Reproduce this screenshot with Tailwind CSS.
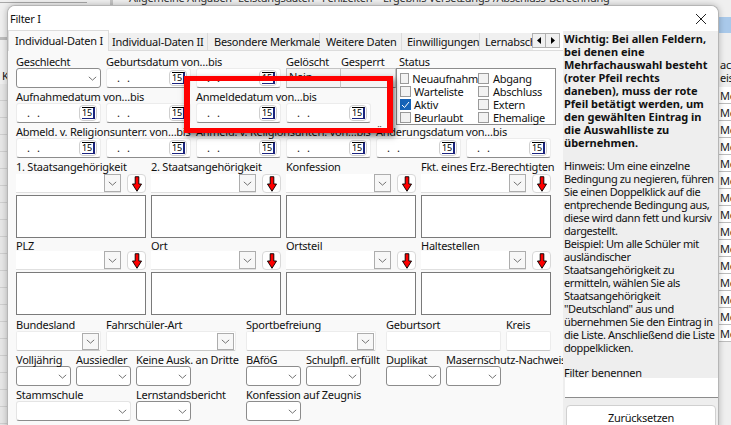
<!DOCTYPE html>
<html lang="de">
<head>
<meta charset="utf-8">
<script src="https://cdn.jsdelivr.net/npm/@tailwindcss/browser@4"></script>
</head>
<body class="m-0">
<svg class="hidden" width="0" height="0">
  <symbol id="chev" viewBox="0 0 11 6"><path d="M1 1l4.5 4L10 1" fill="none" stroke="#555" stroke-width="1"/></symbol>
  <symbol id="arr" viewBox="0 0 11 17"><path d="M3.5 .5h4v8h3l-5 8-5-8h3z" fill="#f00" stroke="#000" stroke-width="1"/></symbol>
</svg>
<div class="relative w-[731px] h-[425px] overflow-hidden bg-[#efefef] font-['Noto_Sans',sans-serif] text-[11px] tracking-[-0.25px] leading-[13px] text-[#111]">

  <!-- window behind -->
  <div class="absolute left-0 top-[2px] w-[87px] h-px bg-[#a8a8a8]"></div>
  <div class="absolute left-[110px] top-0 w-[3px] h-[5px] bg-[#c4c4c4]"></div>
  <div class="absolute left-[129px] top-[-9px] flex whitespace-nowrap text-[#333]">
    <span class="w-[109px]">Allgemeine Angaben</span><span class="w-[84px]">Leistungsdaten</span><span class="w-[61px]">Fehlzeiten</span><span>Ergebnis Versetzungs-/Abschluss-Berechnung</span>
  </div>
  <div class="absolute left-0 top-[37px] w-[7px] h-[3px] bg-[#bdbdbd]"></div>
  <div class="absolute left-[2px] top-[69px]">K</div>
  <div class="absolute left-0 top-[84px] w-[7px] h-[341px] bg-[repeating-linear-gradient(180deg,#e6e6e6_0,#e6e6e6_16px,#cfcfcf_16px,#cfcfcf_17px)]"></div>
  <div class="absolute left-[719px] top-[17px] w-[12px] h-[16px] bg-[#a9c9ea]"></div>
  <div class="absolute left-[719px] top-[58px] whitespace-nowrap pl-px"><div>ach</div><div>eis</div></div>
  <div class="absolute left-[719px] top-[87px] w-[12px] h-[255px] overflow-hidden pl-px bg-[repeating-linear-gradient(180deg,#fff_0,#fff_16px,#bdbdbd_16px,#bdbdbd_17px)] leading-[17px] text-[#222]">Me<br>Me<br>Me<br>Me<br>Me<br>Me<br>Me<br>Me<br>Me<br>Me<br>Me<br>Me<br>Me<br>Me<br>Me</div>

  <!-- dialog -->
  <div class="absolute left-[7px] top-[5px] w-[712px] h-[425px] flex flex-col rounded-t-[8px] overflow-hidden border border-b-0 border-[#b5b5b5] shadow-[0_0_6px_rgba(0,0,0,0.25)] bg-[#f9f9f9]">
    <div class="h-[25px] shrink-0 bg-white flex items-center justify-between pl-[2px] pr-[11px]">
      <span>Filter I</span>
      <svg width="12" height="12" viewBox="0 0 12 12"><path d="M1 1l10 10M11 1L1 11" stroke="#222" stroke-width="1"/></svg>
    </div>
    <div class="flex flex-1 min-h-0">
      <!-- left -->
      <div class="w-[555px] shrink-0 flex flex-col">
        <!-- tabs -->
        <div class="relative h-[20px] shrink-0 flex items-end border-b border-[#dcdcdc] bg-white">
          <div class="w-[101px] h-[21px] -mb-px z-10 bg-[#f9f9f9] border border-b-0 border-[#dcdcdc] pl-[6px] pt-[3px] whitespace-nowrap">Individual-Daten I</div>
          <div class="w-[99px] h-[17px] bg-[#f0f0f0] border-r border-[#dcdcdc] pl-[3px] pt-[2px] whitespace-nowrap">Individual-Daten II</div>
          <div class="w-[112px] h-[17px] bg-[#f0f0f0] border-r border-[#dcdcdc] pl-[6px] pt-[2px] whitespace-nowrap">Besondere Merkmale</div>
          <div class="w-[82px] h-[17px] bg-[#f0f0f0] border-r border-[#dcdcdc] pl-[6px] pt-[2px] whitespace-nowrap">Weitere Daten</div>
          <div class="w-[78px] h-[17px] bg-[#f0f0f0] border-r border-[#dcdcdc] pl-[5px] pt-[2px] whitespace-nowrap">Einwilligungen</div>
          <div class="w-[53px] h-[17px] bg-[#f0f0f0] pl-[5px] pt-[2px] whitespace-nowrap overflow-hidden">Lernabschluss</div>
          <div class="absolute left-[524px] top-[2px] flex">
            <div class="w-[14px] h-[15px] bg-[#f0f0f0] border border-[#b0b0b0] flex items-center justify-center"><svg width="4" height="7" viewBox="0 0 4 7"><path d="M4 0v7L0 3.5z" fill="#000"/></svg></div>
            <div class="w-[14px] h-[15px] bg-[#f0f0f0] border border-l-0 border-[#b0b0b0] flex items-center justify-center"><svg width="4" height="7" viewBox="0 0 4 7"><path d="M0 0v7l4-3.5z" fill="#000"/></svg></div>
          </div>
        </div>

        <div class="flex-1 flex flex-col pl-[8px] pt-[4px]">
          <!-- row 1 -->
          <div class="flex h-[35px] shrink-0 gap-[5px]">
            <div class="w-[85px]"><div class="h-[13px] whitespace-nowrap">Geschlecht</div>
              <div class="h-[20px] bg-white border border-[#8c8c8c] rounded-[3px] flex items-center justify-end pr-[3px]"><svg class="w-[9px] h-[5px]"><use href="#chev"/></svg></div></div>
            <div class="w-[85px]"><div class="h-[13px] whitespace-nowrap">Geburtsdatum von…bis</div>
              <div class="h-[20px] bg-white border border-[#ececec] border-b-[#8c8c8c] rounded-[3px] flex items-center justify-between pl-[10px] pr-[3px]"><span class="tracking-[7px] -mt-px">..</span><span class="w-[18px] h-[16px] border border-[#cfcfcf] rounded-[4px] flex items-center justify-center"><span class="w-[13px] h-[12px] border-t border-r-2 border-b border-t-black border-[#1a237e] text-[9px] leading-[10px] text-center text-black">15</span></span></div></div>
            <div class="w-[85px]"><div class="h-[13px]"></div>
              <div class="h-[20px] bg-white border border-[#ececec] border-b-[#8c8c8c] rounded-[3px] flex items-center justify-between pl-[10px] pr-[3px]"><span class="tracking-[7px] -mt-px">..</span><span class="w-[18px] h-[16px] border border-[#cfcfcf] rounded-[4px] flex items-center justify-center"><span class="w-[13px] h-[12px] border-t border-r-2 border-b border-t-black border-[#1a237e] text-[9px] leading-[10px] text-center text-black">15</span></span></div></div>
            <div class="w-[55px]"><div class="h-[13px] whitespace-nowrap">Gelöscht</div>
              <div class="h-[20px] bg-[#f4f4f4] border border-[#c4c4c4] border-b-[#8c8c8c] pl-[2px] pt-px">Nein</div></div>
            <div class="w-[55px] -ml-[5px]"><div class="h-[13px] whitespace-nowrap">Gesperrt</div>
              <div class="h-[20px] bg-[#f4f4f4] border border-l-0 border-[#c4c4c4] border-b-[#8c8c8c]"></div></div>
            <div class="-ml-[5px]"><div class="h-[13px] whitespace-nowrap pl-[3px]">Status</div>
              <div class="w-[160px] h-[57px] bg-white border border-[#8c8c8c] flex pl-[3px] pt-[3px]">
                <div class="w-[78px] flex flex-col">
                  <div class="h-[13px] flex items-center gap-[3px] whitespace-nowrap"><span class="w-[11px] h-[11px] border border-[#9a9a9a] bg-[#f2f2f2]"></span>Neuaufnahm</div>
                  <div class="h-[13px] flex items-center gap-[3px] whitespace-nowrap"><span class="w-[11px] h-[11px] border border-[#9a9a9a] bg-[#f2f2f2]"></span>Warteliste</div>
                  <div class="h-[13px] flex items-center gap-[3px] whitespace-nowrap"><span class="w-[11px] h-[11px] bg-[#1563b8] flex items-center justify-center"><svg width="9" height="8" viewBox="0 0 9 8"><path d="M1 4l2.5 2.5L8 1" fill="none" stroke="#fff" stroke-width="1"/></svg></span>Aktiv</div>
                  <div class="h-[13px] flex items-center gap-[3px] whitespace-nowrap"><span class="w-[11px] h-[11px] border border-[#9a9a9a] bg-[#f2f2f2]"></span>Beurlaubt</div>
                </div>
                <div class="flex flex-col">
                  <div class="h-[13px] flex items-center gap-[4px] whitespace-nowrap"><span class="w-[11px] h-[11px] border border-[#9a9a9a] bg-[#f2f2f2]"></span>Abgang</div>
                  <div class="h-[13px] flex items-center gap-[4px] whitespace-nowrap"><span class="w-[11px] h-[11px] border border-[#9a9a9a] bg-[#f2f2f2]"></span>Abschluss</div>
                  <div class="h-[13px] flex items-center gap-[4px] whitespace-nowrap"><span class="w-[11px] h-[11px] border border-[#9a9a9a] bg-[#f2f2f2]"></span>Extern</div>
                  <div class="h-[13px] flex items-center gap-[4px] whitespace-nowrap"><span class="w-[11px] h-[11px] border border-[#9a9a9a] bg-[#f2f2f2]"></span>Ehemalige</div>
                </div>
              </div>
            </div>
          </div>
          <!-- row 2 -->
          <div class="flex h-[35px] shrink-0 gap-[5px]">
            <div class="w-[85px]"><div class="h-[13px] whitespace-nowrap">Aufnahmedatum von…bis</div>
              <div class="h-[20px] bg-white border border-[#ececec] border-b-[#8c8c8c] rounded-[3px] flex items-center justify-between pl-[10px] pr-[3px]"><span class="tracking-[7px] -mt-px">..</span><span class="w-[18px] h-[16px] border border-[#cfcfcf] rounded-[4px] flex items-center justify-center"><span class="w-[13px] h-[12px] border-t border-r-2 border-b border-t-black border-[#1a237e] text-[9px] leading-[10px] text-center text-black">15</span></span></div></div>
            <div class="w-[85px]"><div class="h-[13px]"></div>
              <div class="h-[20px] bg-white border border-[#ececec] border-b-[#8c8c8c] rounded-[3px] flex items-center justify-between pl-[10px] pr-[3px]"><span class="tracking-[7px] -mt-px">..</span><span class="w-[18px] h-[16px] border border-[#cfcfcf] rounded-[4px] flex items-center justify-center"><span class="w-[13px] h-[12px] border-t border-r-2 border-b border-t-black border-[#1a237e] text-[9px] leading-[10px] text-center text-black">15</span></span></div></div>
            <div class="w-[85px]"><div class="h-[13px] whitespace-nowrap">Anmeldedatum von…bis</div>
              <div class="h-[20px] bg-white border border-[#ececec] border-b-[#8c8c8c] rounded-[3px] flex items-center justify-between pl-[10px] pr-[3px]"><span class="tracking-[7px] -mt-px">..</span><span class="w-[18px] h-[16px] border border-[#cfcfcf] rounded-[4px] flex items-center justify-center"><span class="w-[13px] h-[12px] border-t border-r-2 border-b border-t-black border-[#1a237e] text-[9px] leading-[10px] text-center text-black">15</span></span></div></div>
            <div class="w-[85px]"><div class="h-[13px]"></div>
              <div class="h-[20px] bg-white border border-[#ececec] border-b-[#8c8c8c] rounded-[3px] flex items-center justify-between pl-[10px] pr-[3px]"><span class="tracking-[7px] -mt-px">..</span><span class="w-[18px] h-[16px] border border-[#cfcfcf] rounded-[4px] flex items-center justify-center"><span class="w-[13px] h-[12px] border-t border-r-2 border-b border-t-black border-[#1a237e] text-[9px] leading-[10px] text-center text-black">15</span></span></div></div>
          </div>
          <!-- row 3 -->
          <div class="flex h-[35px] shrink-0 gap-[5px]">
            <div class="w-[85px]"><div class="h-[13px] whitespace-nowrap">Abmeld. v. Religionsunterr. von…bis</div>
              <div class="h-[20px] bg-white border border-[#ececec] border-b-[#8c8c8c] rounded-[3px] flex items-center justify-between pl-[10px] pr-[3px]"><span class="tracking-[7px] -mt-px">..</span><span class="w-[18px] h-[16px] border border-[#cfcfcf] rounded-[4px] flex items-center justify-center"><span class="w-[13px] h-[12px] border-t border-r-2 border-b border-t-black border-[#1a237e] text-[9px] leading-[10px] text-center text-black">15</span></span></div></div>
            <div class="w-[85px]"><div class="h-[13px]"></div>
              <div class="h-[20px] bg-white border border-[#ececec] border-b-[#8c8c8c] rounded-[3px] flex items-center justify-between pl-[10px] pr-[3px]"><span class="tracking-[7px] -mt-px">..</span><span class="w-[18px] h-[16px] border border-[#cfcfcf] rounded-[4px] flex items-center justify-center"><span class="w-[13px] h-[12px] border-t border-r-2 border-b border-t-black border-[#1a237e] text-[9px] leading-[10px] text-center text-black">15</span></span></div></div>
            <div class="w-[85px]"><div class="h-[13px] whitespace-nowrap">Anmeld. v. Religionsunterr. von…bis</div>
              <div class="h-[20px] bg-white border border-[#ececec] border-b-[#8c8c8c] rounded-[3px] flex items-center justify-between pl-[10px] pr-[3px]"><span class="tracking-[7px] -mt-px">..</span><span class="w-[18px] h-[16px] border border-[#cfcfcf] rounded-[4px] flex items-center justify-center"><span class="w-[13px] h-[12px] border-t border-r-2 border-b border-t-black border-[#1a237e] text-[9px] leading-[10px] text-center text-black">15</span></span></div></div>
            <div class="w-[85px]"><div class="h-[13px]"></div>
              <div class="h-[20px] bg-white border border-[#ececec] border-b-[#8c8c8c] rounded-[3px] flex items-center justify-between pl-[10px] pr-[3px]"><span class="tracking-[7px] -mt-px">..</span><span class="w-[18px] h-[16px] border border-[#cfcfcf] rounded-[4px] flex items-center justify-center"><span class="w-[13px] h-[12px] border-t border-r-2 border-b border-t-black border-[#1a237e] text-[9px] leading-[10px] text-center text-black">15</span></span></div></div>
            <div class="w-[85px]"><div class="h-[13px] whitespace-nowrap">Änderungsdatum von…bis</div>
              <div class="h-[20px] bg-white border border-[#ececec] border-b-[#8c8c8c] rounded-[3px] flex items-center justify-between pl-[10px] pr-[3px]"><span class="tracking-[7px] -mt-px">..</span><span class="w-[18px] h-[16px] border border-[#cfcfcf] rounded-[4px] flex items-center justify-center"><span class="w-[13px] h-[12px] border-t border-r-2 border-b border-t-black border-[#1a237e] text-[9px] leading-[10px] text-center text-black">15</span></span></div></div>
            <div class="w-[85px]"><div class="h-[13px]"></div>
              <div class="h-[20px] bg-white border border-[#ececec] border-b-[#8c8c8c] rounded-[3px] flex items-center justify-between pl-[10px] pr-[3px]"><span class="tracking-[7px] -mt-px">..</span><span class="w-[18px] h-[16px] border border-[#cfcfcf] rounded-[4px] flex items-center justify-center"><span class="w-[13px] h-[12px] border-t border-r-2 border-b border-t-black border-[#1a237e] text-[9px] leading-[10px] text-center text-black">15</span></span></div></div>
          </div>
          <!-- row 4 -->
          <div class="flex h-[79px] shrink-0 gap-[5px]">
            <div class="w-[130px]"><div class="h-[14px] whitespace-nowrap">1. Staatsangehörigkeit</div>
              <div class="flex h-[19px] justify-between"><div class="w-[105px] bg-white border-b border-[#e0e0e0] flex justify-end"><span class="w-[17px] h-[18px] border border-[#adadad] bg-[#f7f7f7] flex items-center justify-center"><svg class="w-[9px] h-[5px]"><use href="#chev"/></svg></span></div><div class="w-[19px] border border-[#d8d8d8] rounded-[4px] bg-white flex items-center justify-center"><svg class="w-[10px] h-[16px]"><use href="#arr"/></svg></div></div>
              <div class="h-[43px] mt-[2px] bg-white border border-[#7a7a7a]"></div></div>
            <div class="w-[130px]"><div class="h-[14px] whitespace-nowrap">2. Staatsangehörigkeit</div>
              <div class="flex h-[19px] justify-between"><div class="w-[105px] bg-white border-b border-[#e0e0e0] flex justify-end"><span class="w-[17px] h-[18px] border border-[#adadad] bg-[#f7f7f7] flex items-center justify-center"><svg class="w-[9px] h-[5px]"><use href="#chev"/></svg></span></div><div class="w-[19px] border border-[#d8d8d8] rounded-[4px] bg-white flex items-center justify-center"><svg class="w-[10px] h-[16px]"><use href="#arr"/></svg></div></div>
              <div class="h-[43px] mt-[2px] bg-white border border-[#7a7a7a]"></div></div>
            <div class="w-[130px]"><div class="h-[14px] whitespace-nowrap">Konfession</div>
              <div class="flex h-[19px] justify-between"><div class="w-[105px] bg-white border-b border-[#e0e0e0] flex justify-end"><span class="w-[17px] h-[18px] border border-[#adadad] bg-[#f7f7f7] flex items-center justify-center"><svg class="w-[9px] h-[5px]"><use href="#chev"/></svg></span></div><div class="w-[19px] border border-[#d8d8d8] rounded-[4px] bg-white flex items-center justify-center"><svg class="w-[10px] h-[16px]"><use href="#arr"/></svg></div></div>
              <div class="h-[43px] mt-[2px] bg-white border border-[#7a7a7a]"></div></div>
            <div class="w-[130px]"><div class="h-[14px] whitespace-nowrap">Fkt. eines Erz.-Berechtigten</div>
              <div class="flex h-[19px] justify-between"><div class="w-[105px] bg-white border-b border-[#e0e0e0] flex justify-end"><span class="w-[17px] h-[18px] border border-[#adadad] bg-[#f7f7f7] flex items-center justify-center"><svg class="w-[9px] h-[5px]"><use href="#chev"/></svg></span></div><div class="w-[19px] border border-[#d8d8d8] rounded-[4px] bg-white flex items-center justify-center"><svg class="w-[10px] h-[16px]"><use href="#arr"/></svg></div></div>
              <div class="h-[43px] mt-[2px] bg-white border border-[#7a7a7a]"></div></div>
          </div>
          <!-- row 5 -->
          <div class="flex h-[79px] shrink-0 gap-[5px]">
            <div class="w-[130px]"><div class="h-[12px] whitespace-nowrap">PLZ</div>
              <div class="flex h-[19px] justify-between"><div class="w-[105px] bg-white border-b border-[#e0e0e0] flex justify-end"><span class="w-[17px] h-[18px] border border-[#adadad] bg-[#f7f7f7] flex items-center justify-center"><svg class="w-[9px] h-[5px]"><use href="#chev"/></svg></span></div><div class="w-[19px] border border-[#d8d8d8] rounded-[4px] bg-white flex items-center justify-center"><svg class="w-[10px] h-[16px]"><use href="#arr"/></svg></div></div>
              <div class="h-[43px] mt-[2px] bg-white border border-[#7a7a7a]"></div></div>
            <div class="w-[130px]"><div class="h-[12px] whitespace-nowrap">Ort</div>
              <div class="flex h-[19px] justify-between"><div class="w-[105px] bg-white border-b border-[#e0e0e0] flex justify-end"><span class="w-[17px] h-[18px] border border-[#adadad] bg-[#f7f7f7] flex items-center justify-center"><svg class="w-[9px] h-[5px]"><use href="#chev"/></svg></span></div><div class="w-[19px] border border-[#d8d8d8] rounded-[4px] bg-white flex items-center justify-center"><svg class="w-[10px] h-[16px]"><use href="#arr"/></svg></div></div>
              <div class="h-[43px] mt-[2px] bg-white border border-[#7a7a7a]"></div></div>
            <div class="w-[130px]"><div class="h-[12px] whitespace-nowrap">Ortsteil</div>
              <div class="flex h-[19px] justify-between"><div class="w-[105px] bg-white border-b border-[#e0e0e0] flex justify-end"><span class="w-[17px] h-[18px] border border-[#adadad] bg-[#f7f7f7] flex items-center justify-center"><svg class="w-[9px] h-[5px]"><use href="#chev"/></svg></span></div><div class="w-[19px] border border-[#d8d8d8] rounded-[4px] bg-white flex items-center justify-center"><svg class="w-[10px] h-[16px]"><use href="#arr"/></svg></div></div>
              <div class="h-[43px] mt-[2px] bg-white border border-[#7a7a7a]"></div></div>
            <div class="w-[130px]"><div class="h-[12px] whitespace-nowrap">Haltestellen</div>
              <div class="flex h-[19px] justify-between"><div class="w-[105px] bg-white border-b border-[#e0e0e0] flex justify-end"><span class="w-[17px] h-[18px] border border-[#adadad] bg-[#f7f7f7] flex items-center justify-center"><svg class="w-[9px] h-[5px]"><use href="#chev"/></svg></span></div><div class="w-[19px] border border-[#d8d8d8] rounded-[4px] bg-white flex items-center justify-center"><svg class="w-[10px] h-[16px]"><use href="#arr"/></svg></div></div>
              <div class="h-[43px] mt-[2px] bg-white border border-[#7a7a7a]"></div></div>
          </div>
          <!-- row 6 -->
          <div class="flex h-[35px] shrink-0">
            <div class="w-[85px] mr-[5px]"><div class="h-[13px] whitespace-nowrap">Bundesland</div>
              <div class="h-[20px] bg-white border border-[#ececec] border-b-[#c8c8c8] rounded-[2px] flex items-center justify-end pr-px"><span class="w-[17px] h-[17px] border border-[#adadad] bg-[#f7f7f7] flex items-center justify-center"><svg class="w-[9px] h-[5px]"><use href="#chev"/></svg></span></div></div>
            <div class="w-[130px] mr-[10px]"><div class="h-[13px] whitespace-nowrap">Fahrschüler-Art</div>
              <div class="h-[20px] bg-white border border-[#ececec] border-b-[#c8c8c8] rounded-[2px] flex items-center justify-end pr-px"><span class="w-[17px] h-[17px] border border-[#adadad] bg-[#f7f7f7] flex items-center justify-center"><svg class="w-[9px] h-[5px]"><use href="#chev"/></svg></span></div></div>
            <div class="w-[130px] mr-[10px]"><div class="h-[13px] whitespace-nowrap">Sportbefreiung</div>
              <div class="h-[20px] bg-white border border-[#ececec] border-b-[#c8c8c8] rounded-[2px] flex items-center justify-end pr-px"><span class="w-[17px] h-[17px] border border-[#adadad] bg-[#f7f7f7] flex items-center justify-center"><svg class="w-[9px] h-[5px]"><use href="#chev"/></svg></span></div></div>
            <div class="w-[115px] mr-[5px]"><div class="h-[13px] whitespace-nowrap">Geburtsort</div>
              <div class="h-[20px] bg-white border border-[#ececec] border-b-[#c8c8c8] rounded-[2px]"></div></div>
            <div class="w-[45px]"><div class="h-[13px] whitespace-nowrap">Kreis</div>
              <div class="h-[20px] bg-white border border-[#ececec] border-b-[#c8c8c8] rounded-[2px]"></div></div>
          </div>
          <!-- row 7 -->
          <div class="flex h-[35px] shrink-0 gap-[5px]">
            <div class="w-[55px]"><div class="h-[13px] whitespace-nowrap">Volljährig</div>
              <div class="h-[20px] bg-white border border-[#8c8c8c] rounded-[3px] flex items-center justify-end pr-[3px]"><svg class="w-[9px] h-[5px]"><use href="#chev"/></svg></div></div>
            <div class="w-[55px]"><div class="h-[13px] whitespace-nowrap">Aussiedler</div>
              <div class="h-[20px] bg-white border border-[#8c8c8c] rounded-[3px] flex items-center justify-end pr-[3px]"><svg class="w-[9px] h-[5px]"><use href="#chev"/></svg></div></div>
            <div class="w-[55px] mr-[50px]"><div class="h-[13px] whitespace-nowrap">Keine Ausk. an Dritte</div>
              <div class="h-[20px] bg-white border border-[#8c8c8c] rounded-[3px] flex items-center justify-end pr-[3px]"><svg class="w-[9px] h-[5px]"><use href="#chev"/></svg></div></div>
            <div class="w-[55px]"><div class="h-[13px] whitespace-nowrap">BAföG</div>
              <div class="h-[20px] bg-white border border-[#8c8c8c] rounded-[3px] flex items-center justify-end pr-[3px]"><svg class="w-[9px] h-[5px]"><use href="#chev"/></svg></div></div>
            <div class="w-[55px] mr-[20px]"><div class="h-[13px] whitespace-nowrap">Schulpfl. erfüllt</div>
              <div class="h-[20px] bg-white border border-[#8c8c8c] rounded-[3px] flex items-center justify-end pr-[3px]"><svg class="w-[9px] h-[5px]"><use href="#chev"/></svg></div></div>
            <div class="w-[55px]"><div class="h-[13px] whitespace-nowrap">Duplikat</div>
              <div class="h-[20px] bg-white border border-[#8c8c8c] rounded-[3px] flex items-center justify-end pr-[3px]"><svg class="w-[9px] h-[5px]"><use href="#chev"/></svg></div></div>
            <div class="w-[55px]"><div class="h-[13px] whitespace-nowrap">Masernschutz-Nachweis</div>
              <div class="h-[20px] bg-white border border-[#8c8c8c] rounded-[3px] flex items-center justify-end pr-[3px]"><svg class="w-[9px] h-[5px]"><use href="#chev"/></svg></div></div>
          </div>
          <!-- row 8 -->
          <div class="flex h-[35px] shrink-0 gap-[5px]">
            <div class="w-[115px]"><div class="h-[13px] whitespace-nowrap">Stammschule</div>
              <div class="h-[20px] bg-white border border-[#e4e4e4] border-b-[#8c8c8c] rounded-[3px] flex items-center justify-end pr-[3px]"><svg class="w-[9px] h-[5px]"><use href="#chev"/></svg></div></div>
            <div class="w-[55px] mr-[50px]"><div class="h-[13px] whitespace-nowrap">Lernstandsbericht</div>
              <div class="h-[20px] bg-white border border-[#8c8c8c] rounded-[3px] flex items-center justify-end pr-[3px]"><svg class="w-[9px] h-[5px]"><use href="#chev"/></svg></div></div>
            <div class="w-[55px]"><div class="h-[13px] whitespace-nowrap">Konfession auf Zeugnis</div>
              <div class="h-[20px] bg-white border border-[#8c8c8c] rounded-[3px] flex items-center justify-end pr-[3px]"><svg class="w-[9px] h-[5px]"><use href="#chev"/></svg></div></div>
          </div>
        </div>
      </div>
      <!-- right -->
      <div class="flex-1 min-w-0 bg-[#eeeeee] pl-[1px] pt-[1px] flex flex-col">
        <div class="font-bold whitespace-nowrap tracking-normal">Wichtig: Bei allen Feldern,<br>bei denen eine<br>Mehrfachauswahl besteht<br>(roter Pfeil rechts<br>daneben), muss der rote<br>Pfeil betätigt werden, um<br>den gewählten Eintrag in<br>die Auswahlliste zu<br>übernehmen.</div>
        <div class="mt-[10px] whitespace-nowrap tracking-[-0.4px]">Hinweis: Um eine einzelne<br>Bedingung zu negieren, führen<br>Sie einen Doppelklick auf die<br>entprechende Bedingung aus,<br>diese wird dann fett und kursiv<br>dargestellt.<br>Beispiel: Um alle Schüler mit<br>ausländischer<br>Staatsangehörigkeit zu<br>ermitteln, wählen Sie als<br>Staatsangehörigkeit<br>"Deutschland" aus und<br>übernehmen Sie den Eintrag in<br>die Liste. Anschließend die Liste<br>doppelklicken.</div>
        <div class="mt-[12px]">Filter benennen</div>
        <div class="h-[20px] -mt-px bg-white border-b border-[#8c8c8c] ml-px"></div>
        <div class="h-[24px] mt-[7px] mx-[2px] bg-white border border-[#d0d0d0] rounded-[4px] flex items-center justify-center">Zurücksetzen</div>
      </div>
    </div>
  </div>

  <!-- red annotation frame -->
  <div class="absolute left-[184px] top-[76px] w-[209px] h-[57px] border-y-[5px] border-x-[6px] border-[#ff0000] shadow-[2px_3px_6px_rgba(0,0,0,0.55)]"></div>
</div>
</body>
</html>
